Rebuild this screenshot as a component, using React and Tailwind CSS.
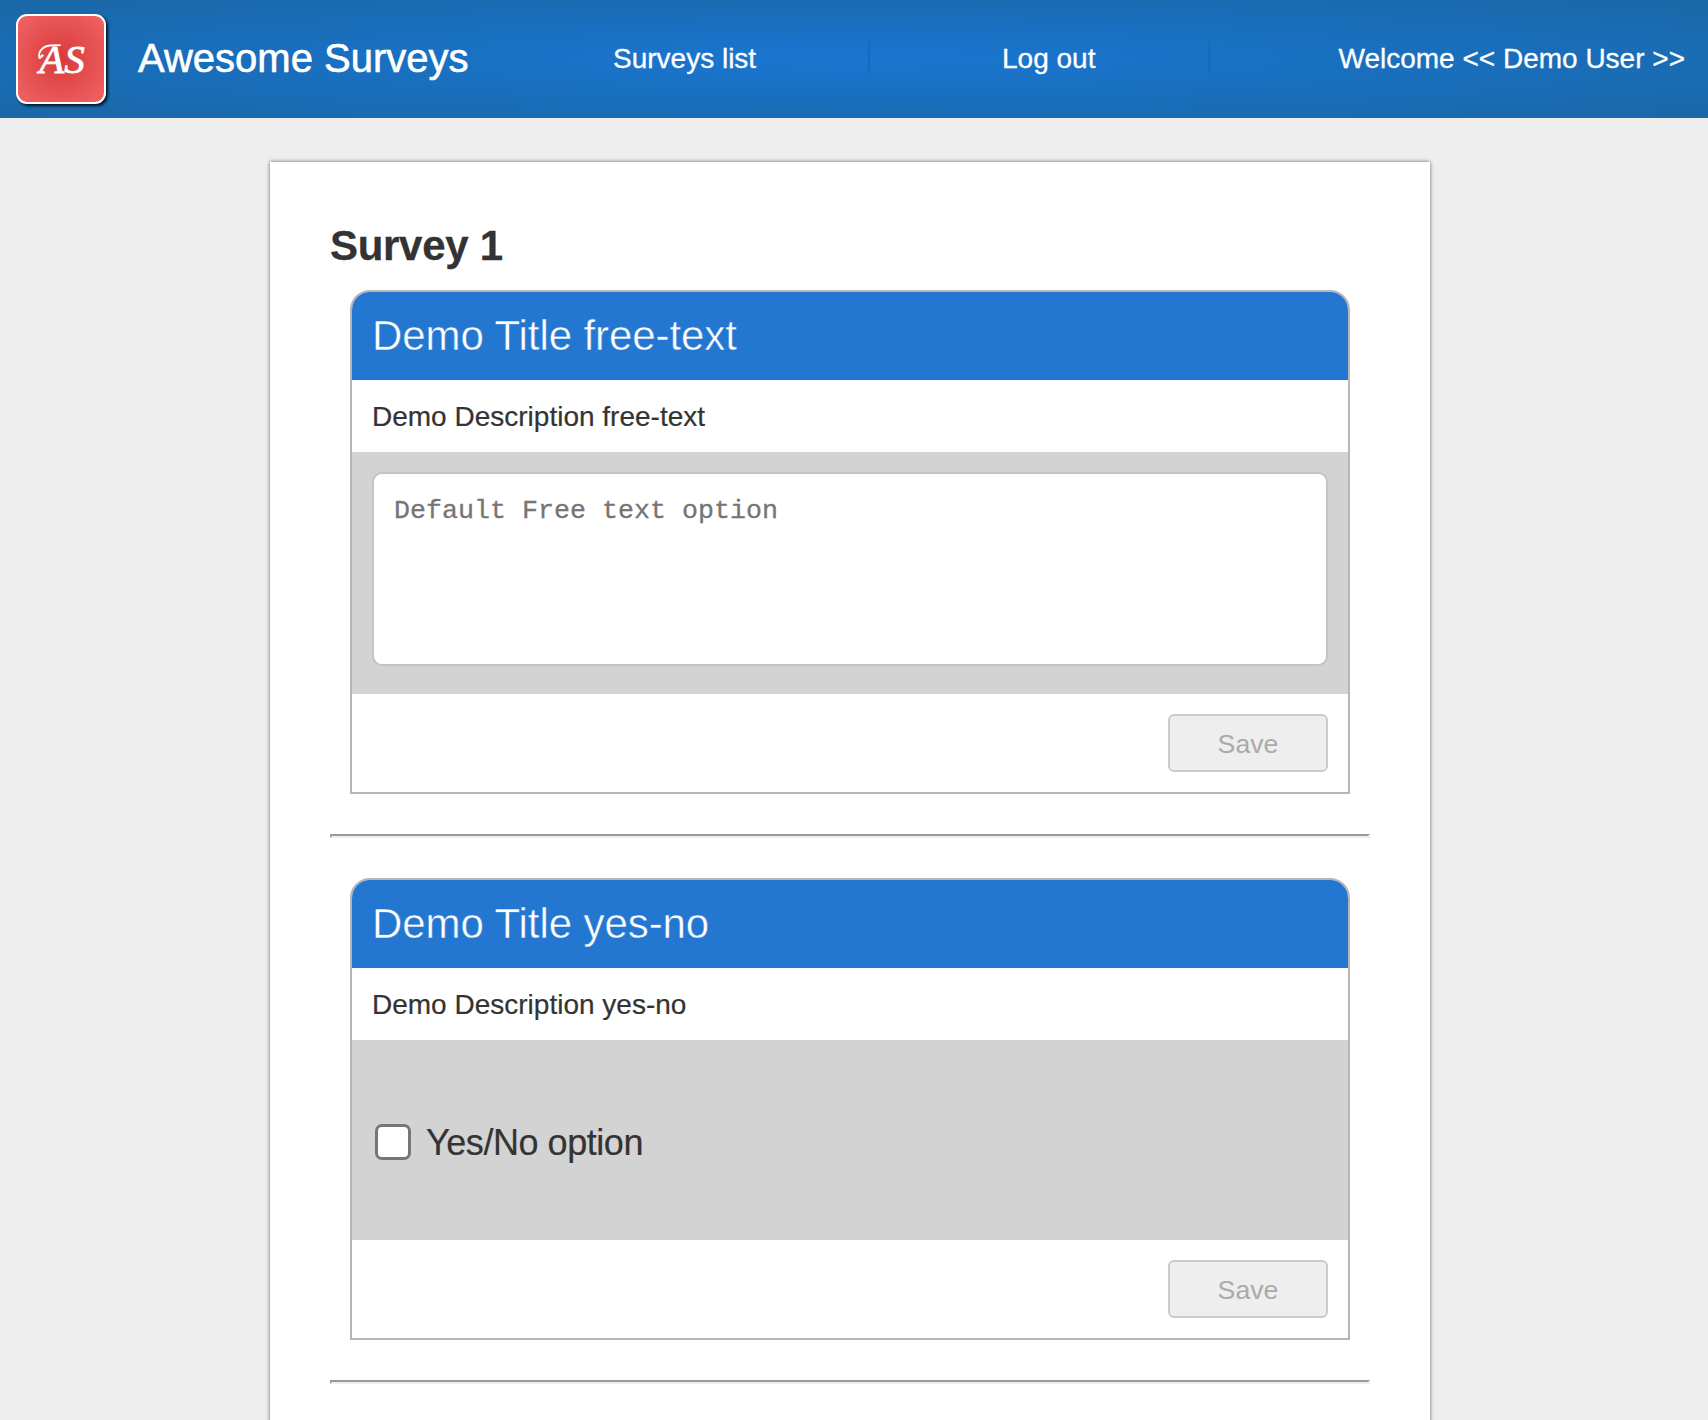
import React from "react";

function Logo() {
  return (
    <div className="relative flex h-[90px] w-[90px] shrink-0 items-center justify-center rounded-[11px] border-2 border-white bg-[radial-gradient(circle,#d93a3a,#f06464)] shadow-[2px_2px_3px_#000c]">
      <span className="pl-0.5 font-['Liberation_Serif',serif] text-[41px] leading-none italic text-white [-webkit-text-stroke:0.8px_white]">AS</span>
      {/* swash on the monogram */}
      <svg className="absolute top-[26px] left-[18px]" width="28" height="24" fill="none" stroke="white" strokeLinecap="round">
        <path d="M3.5 16 C1.5 10 7 4 14 3.5 L24 3.2" strokeWidth="1.8" />
        <path d="M4 15.500 L6.500 13.500" strokeWidth="2.5" />
      </svg>
    </div>
  );
}

function Header() {
  return (
    <header className="flex h-[118px] items-center bg-[radial-gradient(#1976d2,#1a67a6)] text-[28px] text-white [-webkit-text-stroke:0.3px_white]">
      <div className="flex w-[528px] shrink-0 items-center gap-8 pl-4">
        <Logo />
        <h1 className="pb-0.5 text-[40px] leading-[46px] whitespace-nowrap [-webkit-text-stroke:0.6px_white]">Awesome Surveys</h1>
      </div>
      <nav className="flex items-center pb-0.5">
        <a className="flex h-8 w-[342px] items-center border-r-2 border-[#1a69b4] pt-0.5 pl-[85px]">Surveys list</a>
        <a className="flex h-8 w-[340px] items-center border-r-2 border-[#1a69b4] pt-0.5 pl-[132px]">Log out</a>
      </nav>
      <span className="ml-auto pr-[23px] whitespace-nowrap">Welcome &lt;&lt; Demo User &gt;&gt;</span>
    </header>
  );
}

function Question({ title, description, children }) {
  return (
    <section className="mx-5 overflow-hidden rounded-t-[20px] border-2 border-[#b9b5b5]">
      <h3 className="flex h-[88px] items-center bg-[#2377d1] px-5 pb-px text-[42px] tracking-[-0.08px] text-white [-webkit-text-stroke:0.5px_#2377d1]">{title}</h3>
      <p className="flex h-[72px] items-center px-5 pt-0.5 text-[28px] [-webkit-text-stroke:0.2px_#333]">{description}</p>
      {children}
      <footer className="flex h-[98px] items-center justify-end px-5">
        <button disabled className="h-[58px] w-[160px] rounded-[6px] border-2 border-[#cbcbcb] bg-[#eee] pt-px text-[26.67px] text-[#aaa]">
          Save
        </button>
      </footer>
    </section>
  );
}

function Rule() {
  return <hr className="my-10 h-1 border-2 border-t-[#9a9a9a] border-l-[#9a9a9a] border-r-[#eee] border-b-[#eee]" />;
}

export default function App() {
  return (
    <div className="h-[1420px] overflow-hidden bg-[#eee] font-['Liberation_Sans',Arial,sans-serif] text-[#333]">
      <Header />
      <main className="mt-11 ml-[270px] h-[1400px] w-[1160px] bg-white px-[60px] pt-[60px] shadow-[0_0_4px_#666]">
        <h2 className="h-[68px] text-[42px] leading-[48px] font-bold tracking-[-0.3px] [-webkit-text-stroke:0.3px_#333]">Survey 1</h2>
        <Question title="Demo Title free-text" description="Demo Description free-text">
          <div className="h-[242px] bg-[#d3d3d3] p-5">
            <textarea
              className="block h-[194px] w-full resize-none rounded-[10px] border-2 border-[#c4c4c4] bg-white px-5 pt-[21px] pb-5 font-['Liberation_Mono',monospace] text-[26.67px] leading-[32px] placeholder:text-[#757575] [-webkit-text-stroke:0.3px_#757575]"
              placeholder="Default Free text option"
            />
          </div>
        </Question>
        <Rule />
        <Question title="Demo Title yes-no" description="Demo Description yes-no">
          <label className="flex h-[200px] items-center gap-4 bg-[#d3d3d3] pt-[3px] pl-[23px] text-[36px] tracking-[-0.45px] [-webkit-text-stroke:0.2px_#333]">
            <input type="checkbox" className="h-9 w-9 appearance-none rounded-[7px] border-[3px] border-[#767676] bg-white" />
            <span className="-ml-px pt-0.5">Yes/No option</span>
          </label>
        </Question>
        <Rule />
      </main>
    </div>
  );
}
